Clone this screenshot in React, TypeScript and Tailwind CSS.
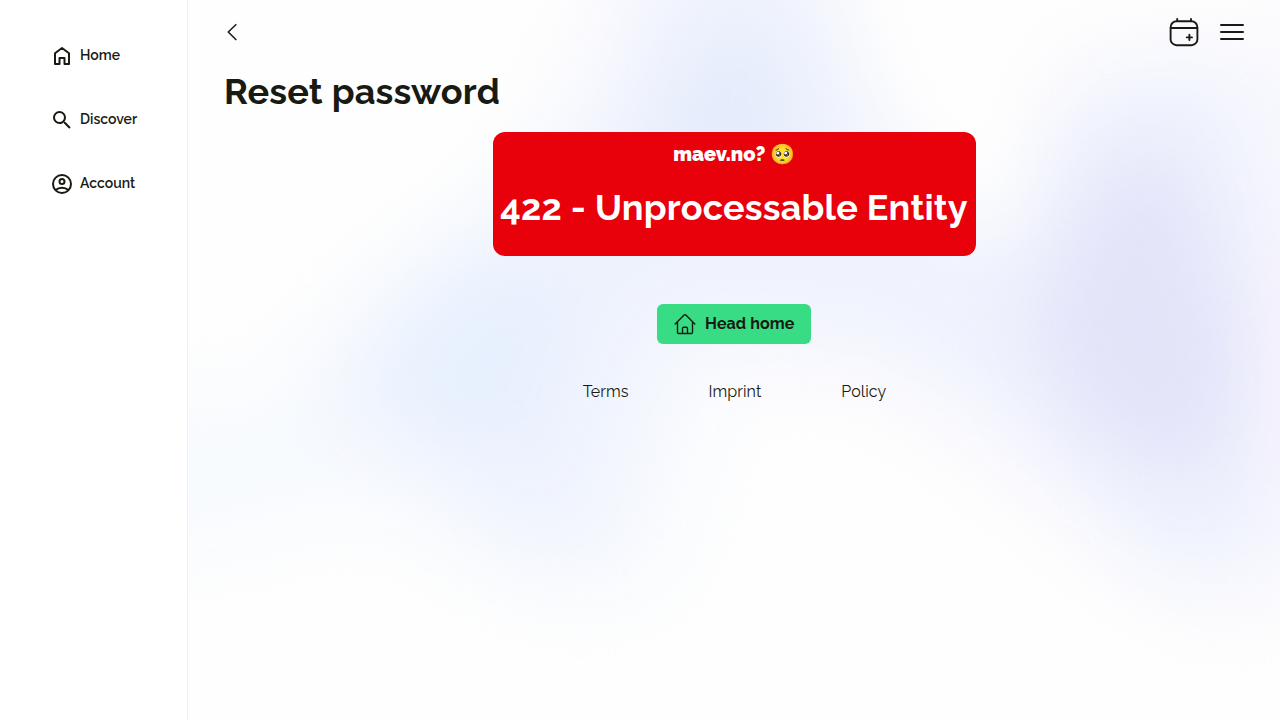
import type { ReactNode } from "react";

function Backdrop() {
  return (
    <svg className="absolute inset-0 -z-10 h-full w-full" viewBox="0 0 1092 720" preserveAspectRatio="none" aria-hidden="true">
      <defs>
        <filter id="soft" x="-60%" y="-60%" width="220%" height="220%" colorInterpolationFilters="sRGB">
          <feGaussianBlur stdDeviation="40" />
        </filter>
      </defs>
      <rect width="1092" height="720" fill="#fefefe" />
      <g filter="url(#soft)">
        <path d="M-100 380 L60 400 L180 280 L310 190 L400 40 L430 -80 L500 300 L540 380 L480 590 L370 610 L180 510 L-20 560 L-100 560Z" fill="#f7fafe" />
        <path d="M430 -80 L620 -80 L670 100 L770 240 L850 240 L870 60 L1180 20 L1180 580 L1020 620 L900 540 L700 390 L520 370 L430 220 L350 170 L400 60Z" fill="#f8f8fe" />
      </g>
      <g filter="url(#soft)">
        <path d="M490 -60 L610 -60 L670 120 L760 245 L840 260 L880 130 L950 80 L1040 90 L1100 400 L1050 570 L970 560 L850 420 L680 320 L480 310 L430 440 L400 550 L330 540 L220 450 L140 400 L260 270 L380 180 L450 80Z" fill="#eef2fd" />
        <path d="M500 40 L590 40 L620 160 L440 200Z" fill="#e4ebfb" />
        <path d="M240 280 L360 250 L370 330 L340 450 L240 440 L180 380Z" fill="#e7f0fe" />
      </g>
      <g filter="url(#soft)">
        <path d="M920 160 L990 150 L1060 350 L1020 490 L890 430 L840 320Z" fill="#e3e3f9" />
      </g>
      <g filter="url(#soft)">
        <path d="M1095 230 L1180 230 L1180 460 L1090 490Z" fill="#f5f0fc" />
      </g>
    </svg>
  );
}

function NavItem({ icon, label }: { icon: ReactNode; label: string }) {
  return (
    <a href="#" className="flex h-16 items-center gap-1.5 text-[14px] font-semibold leading-5">
      {icon}
      <span className="relative -top-px">{label}</span>
    </a>
  );
}

export default function App() {
  return (
    <div className="flex h-screen w-full overflow-hidden bg-white font-[Raleway,Lato,sans-serif] text-[#191a12]">
      <aside className="w-[188px] shrink-0 border-r border-[#f1f1f3] bg-white pt-6 pl-[50px]">
        <nav className="flex flex-col">
          <NavItem
            label="Home"
            icon={
              <svg viewBox="0 0 24 24" className="size-6 shrink-0 fill-none stroke-current stroke-2" strokeLinejoin="round">
                <path d="M5 9.3 12 4l7 5.3V20h-4.5v-6h-5v6H5Z" />
              </svg>
            }
          />
          <NavItem
            label="Discover"
            icon={
              <svg viewBox="0 0 24 24" className="size-6 shrink-0 fill-current">
                <path d="M15.5 14h-.79l-.28-.27A6.47 6.47 0 0 0 16 9.5 6.5 6.5 0 1 0 9.5 16c1.61 0 3.09-.59 4.23-1.57l.27.28v.79l5.2 5.2 1.5-1.5-5.2-5.2zm-6 0a4.5 4.5 0 1 1 0-9 4.5 4.5 0 0 1 0 9z" />
              </svg>
            }
          />
          <NavItem
            label="Account"
            icon={
              <svg viewBox="0 0 24 24" className="size-6 shrink-0 fill-none stroke-current stroke-2">
                <circle cx="12" cy="12" r="9" />
                <circle cx="12" cy="9.5" r="2.5" />
                <path d="M5.5 18c3.7-3.1 9.3-3.1 13 0" />
              </svg>
            }
          />
        </nav>
      </aside>

      <main className="relative isolate flex min-w-0 flex-1 flex-col">
        <Backdrop />
        <header className="flex h-16 items-center justify-between px-8">
          <button aria-label="Back" className="size-6">
            <svg viewBox="0 0 24 24" className="size-6 fill-none stroke-current stroke-[1.5]"><path d="M16.3 4.2 8.3 12l8 8" /></svg>
          </button>
          <div className="flex items-center gap-4">
            <button aria-label="Add event" className="size-8">
              <svg viewBox="0 0 32 32" className="size-8 fill-none stroke-current stroke-[1.9]" strokeLinecap="round">
                <rect x="2.6" y="5.2" width="26.8" height="24" rx="6" />
                <path d="M3 12h26M9.2 3v2M23 3v2M18.8 21.4h5.2M21.4 18.8V24" />
              </svg>
            </button>
            <button aria-label="Menu" className="size-8">
              <svg viewBox="0 0 32 32" className="size-8 fill-none stroke-current stroke-2" strokeLinecap="round"><path d="M5 9h22M5 16h22M5 23h22" /></svg>
            </button>
          </div>
        </header>

        <h1 className="ml-9 h-[68px] whitespace-nowrap pt-[5px] text-[36px] font-bold leading-[44px] tracking-[0.2px]">Reset password</h1>

        <section className="flex h-[124px] w-[483px] flex-col items-center self-center rounded-xl bg-[#e8000b] pt-2 text-white">
          <p className="whitespace-nowrap text-[20px] font-black leading-7 tracking-[-0.05px]">maev.no? 🥺</p>
          <h2 className="mt-[17px] whitespace-nowrap text-[36px] font-bold leading-[44px] tracking-[0.2px]">422 - Unprocessable Entity</h2>
        </section>

        <a href="#" className="mt-12 flex h-10 w-[154px] items-center gap-2 self-center rounded-md bg-[#38dc85] pl-4 text-[16px] font-bold tracking-[0.1px]">
          <svg viewBox="0 0 24 24" className="size-6 shrink-0 fill-none stroke-current stroke-[1.4]" strokeLinecap="round" strokeLinejoin="round">
            <path d="m2.2 12 8.9-8.9a1.3 1.3 0 0 1 1.8 0l8.9 8.9M4.5 10v10.5c0 .6.5 1 1 1h13c.6 0 1-.4 1-1V10M9.5 21v-4.5c0-.8.5-1.2 1.2-1.2h2.6c.7 0 1.2.4 1.2 1.2V21" />
          </svg>
          <span className="whitespace-nowrap">Head home</span>
        </a>

        <footer className="mt-9 flex gap-20 self-center pl-px text-[16px] leading-6 tracking-[0.08px]">
          <a href="#">Terms</a>
          <a href="#">Imprint</a>
          <a href="#">Policy</a>
        </footer>
      </main>
    </div>
  );
}
